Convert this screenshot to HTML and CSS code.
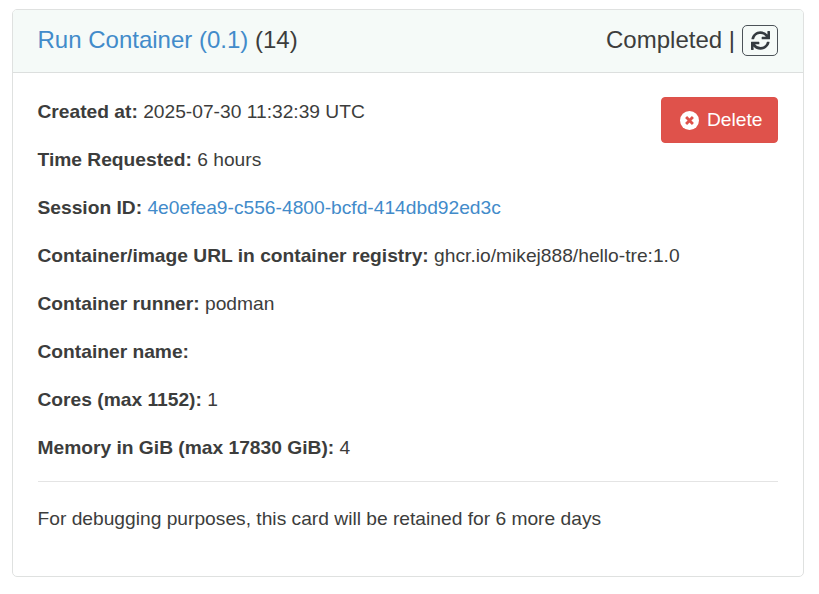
FILE: index.html
```html
<!DOCTYPE html>
<html lang="en">
<head>
<meta charset="utf-8">
<title>Run Container</title>
<link rel="stylesheet" href="styles.css">
</head>
<body>
<article class="card">
  <header class="card-header">
    <div class="title"><a href="#">Run Container (0.1)</a> (14)</div>
    <div class="status"><span>Completed |</span>
      <button class="refresh" aria-label="Relaunch"><svg viewBox="0 0 512 512" width="19" height="19"><path fill="currentColor" d="M440.650 12.570l4 82.770A247.160 247.160 0 0 0 255.830 8C134.730 8 33.910 94.920 12.290 209.820A12 12 0 0 0 24.090 224h49.050a12 12 0 0 0 11.670-9.260 175.910 175.910 0 0 1 317-56.940l-101.460-4.860a12 12 0 0 0-12.570 12v47.410a12 12 0 0 0 12 12H500a12 12 0 0 0 12-12V12a12 12 0 0 0-12-12h-47.370a12 12 0 0 0-11.980 12.570zM255.830 432a175.610 175.610 0 0 1-146-77.800l101.800 4.870a12 12 0 0 0 12.570-12v-47.400a12 12 0 0 0-12-12H12a12 12 0 0 0-12 12V500a12 12 0 0 0 12 12h47.350a12 12 0 0 0 12-12.600l-4.150-82.570A247.170 247.170 0 0 0 255.830 504c121.110 0 221.930-86.920 243.550-201.820a12 12 0 0 0-11.800-14.180h-49.050a12 12 0 0 0-11.670 9.260A175.860 175.860 0 0 1 255.830 432z"/></svg></button>
    </div>
  </header>
  <div class="card-body">
    <button class="delete"><svg viewBox="0 0 20 20" width="19" height="19"><circle cx="10" cy="10" r="10" fill="#fff"/><path d="M6.400 6.400l7.200 7.200m0-7.200l-7.200 7.200" stroke="#df524b" stroke-width="3"/></svg><span>Delete</span></button>
    <p><strong>Created at:</strong> 2025-07-30 11:32:39 UTC</p>
    <p><strong>Time Requested:</strong> 6 hours</p>
    <p><strong>Session ID:</strong> <a href="#">4e0efea9-c556-4800-bcfd-414dbd92ed3c</a></p>
    <p><strong>Container/image URL in container registry:</strong> ghcr.io/mikej888/hello-tre:1.0</p>
    <p><strong>Container runner:</strong> podman</p>
    <p><strong>Container name:</strong></p>
    <p><strong>Cores (max 1152):</strong> 1</p>
    <p><strong>Memory in GiB (max 17830 GiB):</strong> 4</p>
    <hr>
    <p>For debugging purposes, this card will be retained for 6 more days</p>
  </div>
</article>
</body>
</html>
```
FILE: styles.css
```css
* { box-sizing: border-box; }
body {
  margin: 0;
  padding: 9px 15px 0 12px;
  background: #fff;
  color: #3c3d3c;
  font: 19.22px/28.8px "Liberation Sans", Arial, sans-serif;
}
a { color: #428bca; text-decoration: none; }
.card {
  height: 568px;
  border: 1px solid #dfe1e0;
  border-radius: 5px;
  overflow: hidden;
}
.card-header {
  display: flex;
  justify-content: space-between;
  align-items: center;
  height: 63px;
  padding: 0 25px 1px 24.5px;
  border-bottom: 1px solid #dcdfde;
  background: #f5faf8;
  font-size: 24px;
}
.status { display: flex; align-items: center; gap: 7px; }
.refresh {
  display: flex;
  align-items: center;
  justify-content: center;
  width: 36px;
  height: 31px;
  padding: 0;
  border: 1.33px solid #4b5258;
  border-radius: 5px;
  background: transparent;
  color: #343a40;
}
.card-body { padding: 25px 25px 0 24.5px; }
.card-body p { margin: 0 0 19.2px; }
.delete {
  float: right;
  display: flex;
  align-items: center;
  gap: 8px;
  width: 117px;
  height: 46px;
  margin-top: -1px;
  padding: 0 0 0 18px;
  border: 1px solid #dd514a;
  border-radius: 4px;
  background: #df524b;
  color: #fff;
  font: inherit;
}
.delete span { padding-top: 1px; }
hr { clear: both; height: 1px; margin: -1px 0 23px; border: 0; background: #e4e4e4; }
```
